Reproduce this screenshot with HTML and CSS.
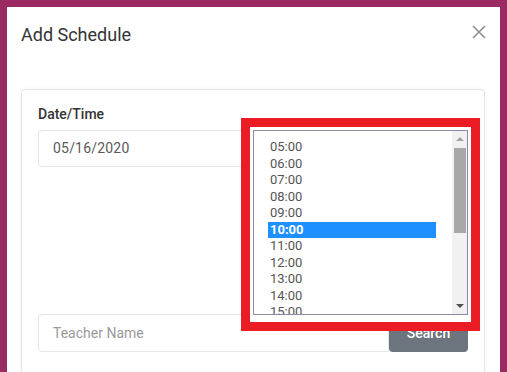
FILE: index.html
```html
<!DOCTYPE html>
<html lang="en">

<head>
    <meta charset="UTF-8">
    <title>Add Schedule</title>
    <link rel="stylesheet" href="styles.css">
</head>

<body>
<div class="modal">
    <div class="modal-header">
        <h5 class="modal-title">Add Schedule</h5>
        <button class="close" type="button">
            <svg width="14" height="14" viewBox="0 0 14 14">
                <path d="M1 1 L13 13 M13 1 L1 13" stroke="#8c8c8c" stroke-width="1.5" fill="none"/>
            </svg>
        </button>
    </div>
    <div class="modal-body">
        <div class="card">
            <label class="label">Date/Time</label>
            <div class="input date">05/16/2020</div>

            <div class="input-group">
                <div class="input placeholder">Teacher Name</div>
                <button class="btn-search" type="button">Search</button>
            </div>
        </div>
    </div>
</div>

<!-- highlighted time dropdown -->
<div class="highlight">
    <div class="listbox">
        <div class="options">
            <div class="option">05:00</div>
            <div class="option">06:00</div>
            <div class="option">07:00</div>
            <div class="option">08:00</div>
            <div class="option">09:00</div>
            <div class="option selected">10:00</div>
            <div class="option">11:00</div>
            <div class="option">12:00</div>
            <div class="option">13:00</div>
            <div class="option">14:00</div>
            <div class="option">15:00</div>
        </div>
        <div class="scrollbar">
            <div class="arrow up"></div>
            <div class="thumb"></div>
            <div class="track"></div>
            <div class="arrow down"></div>
        </div>
    </div>
</div>
</body>

</html>
```

FILE: styles.css
```css
body {
    margin: 0;
    height: 372px;
    overflow: hidden;
    background-color: #9c2a62;
    font-family: Roboto, "Liberation Sans", sans-serif;
    font-size: 14px;
    color: #333;
}

.modal {
    margin: 7px 7px 0 7px;
    height: 500px;
    background-color: white;
}

.modal-header {
    display: flex;
    justify-content: space-between;
    align-items: flex-start;
    padding: 17px 14px;
}

.modal-title {
    margin: 0;
    font-size: 18px;
    line-height: 22px;
    font-weight: 400;
    color: #333;
}

.close {
    border: none;
    background: none;
    padding: 0;
    margin: 1px 0 0 0;
    line-height: 0;
}

.modal-body {
    padding: 26px 15px 0 14px;
}

.card {
    border: 1px solid #e6e6e6;
    border-radius: 4px;
    box-shadow: 0 0 4px rgba(0, 0, 0, .05);
    padding: 14px 16px;
    height: 400px;
}

.label {
    display: block;
    font-weight: 500;
    line-height: 20px;
    margin-bottom: 6px;
    color: #333;
}

.input {
    box-sizing: border-box;
    height: 37px;
    border: 1px solid #e6e6e6;
    border-radius: 4px;
    padding: 0 14px;
    line-height: 35px;
    color: #555;
}

.input.date {
    letter-spacing: 0.2px;
    color: #5a5a5a;
}

.input-group {
    display: flex;
    margin-top: 147px;
    height: 38px;
}

.input-group .input {
    flex: 1;
    height: 38px;
    line-height: 36px;
    border-radius: 4px 0 0 4px;
}

.placeholder {
    color: #9a9a9a;
}

.btn-search {
    width: 79px;
    border: none;
    border-radius: 4px;
    background-color: #6c757d;
    color: white;
    font-family: inherit;
    font-size: 14px;
    font-weight: 500;
}

.highlight {
    position: absolute;
    left: 241px;
    top: 118px;
    border: 9px solid #ec1c24;
    background-color: white;
    padding: 3px 3px 0 3px;
    width: 215px;
    height: 192px;
}

.listbox {
    display: flex;
    height: 183px;
    border: 1px solid #8e89a8;
    background-color: white;
}

.options {
    flex: 1;
    overflow: hidden;
    padding: 8px 16px 0 14px;
    font-size: 13px;
    line-height: 16.5px;
    color: #555;
}

.option {
    padding-left: 2px;
}

.option.selected {
    background-color: #1e90ff;
    color: white;
    font-weight: 700;
}

.scrollbar {
    width: 15px;
    display: flex;
    flex-direction: column;
    background-color: #f1f1f1;
}

.arrow {
    height: 16px;
    position: relative;
}

.arrow:after {
    content: '';
    position: absolute;
    left: 4px;
    top: 6px;
    border-left: 4px solid transparent;
    border-right: 4px solid transparent;
}

.arrow.up:after {
    border-bottom: 4px solid #a3a3a3;
}

.arrow.down:after {
    border-top: 4px solid #505050;
}

.thumb {
    height: 85px;
    margin: 1px 1px 0 2px;
    background-color: #a8a8a8;
}

.track {
    flex: 1;
}
```
